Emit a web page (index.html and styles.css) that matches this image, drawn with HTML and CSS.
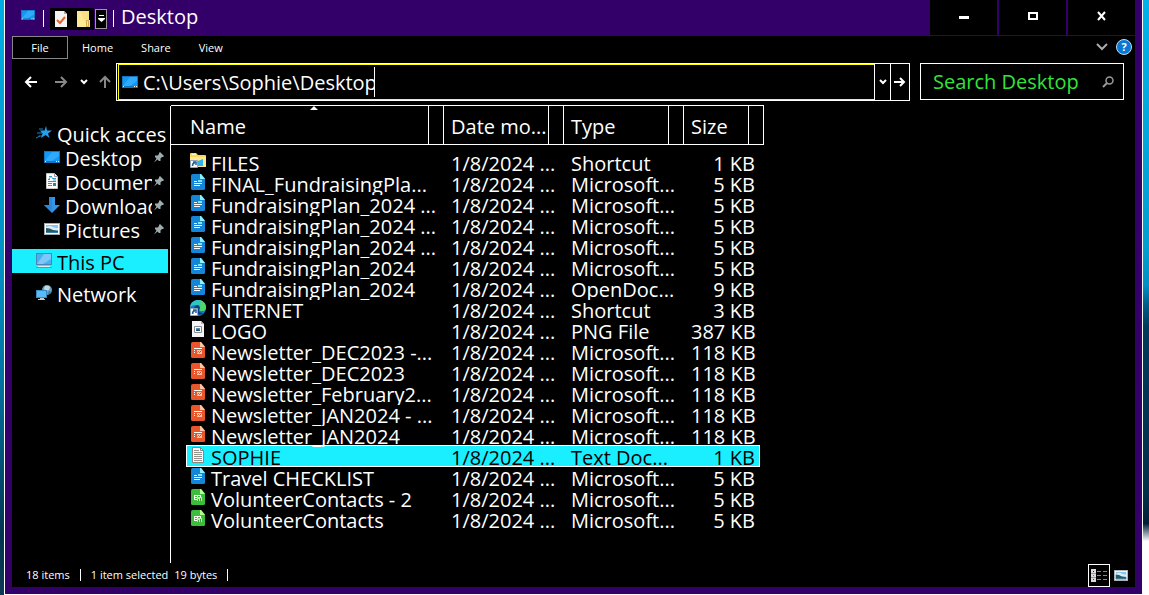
FILE: index.html
```html
<!DOCTYPE html>
<html lang="en">
<head>
<meta charset="utf-8">
<title>Desktop</title>
<link rel="stylesheet" href="styles.css">
</head>
<body>
<svg class="sprite" aria-hidden="true">
  <symbol id="i-doc" viewBox="0 0 16 16"><path d="M3 0h8l4 4.500v10q0 1.500-1.500 1.500h-11Q1 16 1 14.500V1.500Q1 0 3 0z" fill="#1585d8"/><path d="M10 0h1l4 5h-5z" fill="#8df0fd"/><path d="M8 6h4v2H8z" fill="#7ee6fa"/><path d="M4 7h3v1H4zM4 9h8v1H4zM4 11h6v1H4z" fill="#fff"/></symbol>
  <symbol id="i-slide" viewBox="0 0 16 16"><path d="M3 0h8l4 4.500v10q0 1.500-1.500 1.500h-11Q1 16 1 14.500V1.500Q1 0 3 0z" fill="#e9562b"/><path d="M10 0h1l4 5h-5z" fill="#ffc9a8"/><path d="M4 6h8v1H4zM4 8h1v1H4zM4 10h1v1H4z" fill="#fff"/><path d="M7 8h5v4H7z" fill="#ffc3a1"/><path d="m7.500 10.500 1-1 1 1 2-2" stroke="#c4451f" fill="none"/></symbol>
  <symbol id="i-sheet" viewBox="0 0 16 16"><path d="M3 0h8l4 4.500v10q0 1.500-1.500 1.500h-11Q1 16 1 14.500V1.500Q1 0 3 0z" fill="#3cbd3c"/><path d="M10 0h1l4 5h-5z" fill="#b5ff91"/><path d="M4 6h7v5H4z" fill="#fff"/><path d="M5 7h2v1H5zM8 7h2v1H8zM5 9h2v1H5z" fill="#3cbd3c"/><path d="M7 8h5v4H7z" fill="#b9f5a0"/><path d="M8 10h1v2H8zM10 9h1v3h-1z" fill="#33a333"/></symbol>
  <symbol id="i-folder" viewBox="0 0 16 16"><path d="M0 1q0-1 1-1h5l2 2h7q1 0 1 1v11H0z" fill="#fbd75e"/><path d="M2 1h4v1H2z" fill="#fff5c0"/><path d="M0 4h16v10H0z" fill="#ffe793"/><path d="M8 8l5-2v7H8z" fill="#31b4e8"/><path d="M0.500 7.500h7v7h-7z" fill="#fff" stroke="#8aa5bd"/><path d="M2.500 13q0-3 2.500-3.500M3 9h3v3" stroke="#225e9c" fill="none" stroke-width="1.500"/></symbol>
  <symbol id="i-edge" viewBox="0 0 16 16"><circle cx="8" cy="8" r="8" fill="#1877c8"/><path d="M0 7C1-1 13-3 16 6q.5 5-4 5-3 0-2-2 1-4-3-4Q2 5 0 7z" fill="#2fc5c0"/><path d="M9 0q6 1 7 7 0 4-4 4-3 0-2-2 1-5 0-9z" fill="#50d765"/><path d="M8 5Q2 6 5 12q4 5 9 1-4 0-5-2-1-1 1-3z" fill="#123f84"/><path d="M0.500 8.500h7v7h-7z" fill="#fff" stroke="#8aa5bd"/><path d="M2.500 14q0-3 2.500-3.500M3 10h3v3" stroke="#225e9c" fill="none" stroke-width="1.500"/></symbol>
  <symbol id="i-png" viewBox="0 0 16 16"><path d="M2 0h9l3 3v13H2z" fill="#f4f4f4"/><path d="M11 0v3h3z" fill="#b5b5b5"/><path d="M4.500 5.500h7v6h-7z" fill="#fff" stroke="#8b8b8b"/><path d="M6 7h4v3H6z" fill="#4b91c7"/><path d="M6 9l2-1 2 1v1H6z" fill="#26546c"/></symbol>
  <symbol id="i-txt" viewBox="0 0 16 16"><path d="M2.500.5h8l3 3v12h-11z" fill="#f8f8f8" stroke="#8b8580"/><path d="M10.500.5v3h3" fill="none" stroke="#8b8580"/><path d="M4 3h5v1H4zM4 5h8v1H4zM4 7h8v1H4zM4 9h8v1H4zM4 11h8v1H4zM4 13h8v1H4z" fill="#96928e"/></symbol>
  <symbol id="i-desktop" viewBox="0 0 16 12" preserveAspectRatio="none"><path d="M0 0h16v12H0z" fill="#1474bd"/><path d="M1 1h14v9H1z" fill="#1298f4"/><path d="M8 1h7v4L8 10H1z" fill="#2eabff"/><path d="M1 10h1v1H1zM12 10h1v1h-1zM14 10h1v1h-1z" fill="#fff"/></symbol>
  <symbol id="i-picture" viewBox="0 0 16 12" preserveAspectRatio="none"><path d="M0 0h16v12H0z" fill="#a9aaa8"/><path d="M1 1h14v10H1z" fill="#fff"/><path d="M2 2h12v8H2z" fill="#83c5f4"/><path d="M2 4q4-2 7 0l3 1h2v2H2z" fill="#d8edf5"/><path d="M2 5q4 0 7 2l5 1v2H2z" fill="#2b5960"/><path d="M2 9h12v1H2z" fill="#3b7eae"/></symbol>
  <symbol id="i-star" viewBox="0 0 16 16"><path d="M10 1l1 4.500h5l-4 3 1.500 4.500-4-3-4.500 3 1.500-4.500L4 5.500h4.500z" fill="#26a0ea"/><path d="M3 4h4M1 8h5M3 11h3M0 13l4-2" stroke="#1b82c8" fill="none"/></symbol>
  <symbol id="i-document" viewBox="0 0 16 16"><path d="M2.500.5h8l3 3v12h-11z" fill="#fff" stroke="#c7c7c7"/><path d="M10.500.5v3h3" fill="#eee" stroke="#999"/><path d="M5 3h3v1H5zM4 6h2v1H4zM9 5h3v1H9zM4 8h8v1H4zM4 10h4v1H4zM4 12h4v1H4z" fill="#3d92c8"/><path d="M5 6l2-3 2 3M9 7h3" stroke="#23a5dd" fill="none"/><path d="M9 10h3v3H9z" fill="#467991"/></symbol>
  <symbol id="i-download" viewBox="0 0 16 16"><path d="M5 0h6v8h5l-8 8-8-8h5z" fill="#3694e5"/><path d="M5 0h3v15L0 8h5z" fill="#2b87dc"/></symbol>
  <symbol id="i-pc" viewBox="0 0 16 16"><path d="M0 0h16v12H0z" fill="#4a87b2"/><path d="M1 1h14v10H1z" fill="#48aff2"/><path d="M8 1h7v5L7 11H1z" fill="#7dc8fa"/><path d="M2 13h12v1H2z" fill="#d9edf4"/><path d="M0 14h16v1H0z" fill="#71919f"/></symbol>
  <symbol id="i-network" viewBox="0 0 16 16"><circle cx="11" cy="5" r="5" fill="#669ebb"/><path d="M9 1q3-1 5 1l-1 3-3 1-2-2z" fill="#badbe3"/><path d="M13 6l2 1-3 3z" fill="#356f96"/><path d="M0 5h11v8H0z" fill="#3589c2"/><path d="M1 6h9v6H1z" fill="#5bbbf5"/><path d="M4 13h4v1H4zM2 14h7v1H2z" fill="#b9ccd5"/></symbol>
  <symbol id="i-pin" viewBox="0 0 12 12"><path d="M7 1l4 4-1 1-1 0-1.500 1.500V10H6L4.500 8.500 1 11.500 3.500 7.500 2 6V4.500h2.500L6 3V2z" fill="#9eacb0"/></symbol>
</svg>

<div class="window">
  <header class="titlebar">
    <svg class="app-icon"><use href="#i-desktop"/></svg>
    <span class="tick"></span>
    <div class="quick-tools">
      <button class="tool" aria-label="Properties"><svg width="14" height="16" viewBox="0 0 14 16"><path d="M1 0h9l3 3v13H1z" fill="#f5f4f4"/><path d="M10 0v3h3z" fill="#aaa"/><path d="M3 9l3 3 5-6" stroke="#e36331" stroke-width="2" fill="none"/></svg></button>
      <button class="tool" aria-label="New folder"><svg width="14" height="16" viewBox="0 0 14 16"><path d="M1 0h12v9h1v7H1z" fill="#fbdf83"/><path d="M1 0h3l8 16H1z" fill="#ffe893"/><path d="M10.500 15.500v-6h2v6z" fill="#ffe68e" stroke="#d2a94c"/></svg></button>
    </div>
    <button class="customize" aria-label="Customize toolbar"><svg width="7" height="8" viewBox="0 0 7 8"><path d="M1 0h5v1H1zM0 3h7v1L3.500 7 0 4z" fill="#fff"/></svg></button>
    <span class="tick"></span>
    <h1 class="title">Desktop</h1>
    <div class="controls">
      <button aria-label="Minimize"><svg width="12" height="10"><path d="M1 5h10v3H1z" fill="#fff"/></svg></button>
      <button aria-label="Maximize"><svg width="12" height="10"><path d="M2 2h8v6H2z" stroke="#fff" stroke-width="2" fill="none"/></svg></button>
      <button aria-label="Close"><svg width="12" height="10"><path d="M2 1l7 8M9 1L2 9" stroke="#fff" stroke-width="2" fill="none"/></svg></button>
    </div>
  </header>

  <div class="client">
    <nav class="tabs">
      <button class="tab file">File</button>
      <button class="tab">Home</button>
      <button class="tab">Share</button>
      <button class="tab">View</button>
      <button class="plain expand" aria-label="Expand ribbon"><svg width="12" height="8"><path d="M1 1l5 5 5-5" stroke="#aaa" stroke-width="2" fill="none"/></svg></button>
      <button class="help" aria-label="Help">?</button>
    </nav>

    <div class="addressbar">
      <button class="plain back" aria-label="Back"><svg width="14" height="14"><path d="M13 7H2M7 2L2 7l5 5" stroke="#fff" stroke-width="2" fill="none"/></svg></button>
      <button class="plain forward" aria-label="Forward"><svg width="14" height="14"><path d="M1 7h11M7 2l5 5-5 5" stroke="#888" stroke-width="2" fill="none"/></svg></button>
      <button class="plain recent" aria-label="Recent locations"><svg width="8" height="6"><path d="M1 1l3 3 3-3" stroke="#fff" stroke-width="2" fill="none"/></svg></button>
      <button class="plain up" aria-label="Up"><svg width="14" height="14"><path d="M7 13V2M2 7l5-5 5 5" stroke="#888" stroke-width="2" fill="none"/></svg></button>
      <div class="location">
        <div class="path">
          <svg class="path-icon"><use href="#i-desktop"/></svg>
          <input class="path-input" aria-label="Address" value="C:\Users\Sophie\Desktop">
          <span class="caret"></span>
        </div>
        <button class="history" aria-label="Previous locations"><svg width="8" height="6"><path d="M1 1l3 3 3-3" stroke="#fff" stroke-width="2" fill="none"/></svg></button>
        <button class="go" aria-label="Go"><svg width="12" height="12"><path d="M0 6h10M6 2l4 4-4 4" stroke="#fff" stroke-width="2" fill="none"/></svg></button>
      </div>
      <div class="search">
        <input class="search-input" aria-label="Search Desktop" placeholder="Search Desktop">
        <svg width="12" height="12"><circle cx="7.500" cy="4.500" r="3.500" stroke="#999" stroke-width="1.500" fill="none"/><path d="M5 7l-4 4" stroke="#999" stroke-width="2"/></svg>
      </div>
    </div>

    <div class="content">
      <nav class="sidebar">
        <a class="item" href="#"><svg><use href="#i-star"/></svg><span>Quick access</span></a>
        <a class="item child" href="#"><svg class="wide"><use href="#i-desktop"/></svg><span>Desktop</span><svg class="pin"><use href="#i-pin"/></svg></a>
        <a class="item child" href="#"><svg><use href="#i-document"/></svg><span>Documents</span><svg class="pin"><use href="#i-pin"/></svg></a>
        <a class="item child" href="#"><svg><use href="#i-download"/></svg><span>Downloads</span><svg class="pin"><use href="#i-pin"/></svg></a>
        <a class="item child" href="#"><svg class="wide"><use href="#i-picture"/></svg><span>Pictures</span><svg class="pin"><use href="#i-pin"/></svg></a>
        <a class="item group active" href="#"><svg><use href="#i-pc"/></svg><span>This PC</span></a>
        <a class="item group" href="#"><svg><use href="#i-network"/></svg><span>Network</span></a>
      </nav>

      <main class="files">
        <table class="list">
          <colgroup><col class="c-name"><col class="c-date"><col class="c-type"><col class="c-size"></colgroup>
          <thead>
            <tr>
              <th><div class="head"><svg class="sort" width="8" height="4"><path d="M0 4l4-4 4 4z" fill="#fff"/></svg>Name</div></th>
              <th><div class="head">Date mo...</div></th>
              <th><div class="head">Type</div></th>
              <th><div class="head">Size</div></th>
            </tr>
          </thead>
          <tbody>
            <tr><td><div><svg><use href="#i-folder"/></svg>FILES</div></td><td><div>1/8/2024 ...</div></td><td><div>Shortcut</div></td><td><div>1 KB</div></td></tr>
            <tr><td><div><svg><use href="#i-doc"/></svg>FINAL_FundraisingPla...</div></td><td><div>1/8/2024 ...</div></td><td><div>Microsoft...</div></td><td><div>5 KB</div></td></tr>
            <tr><td><div><svg><use href="#i-doc"/></svg>FundraisingPlan_2024 ...</div></td><td><div>1/8/2024 ...</div></td><td><div>Microsoft...</div></td><td><div>5 KB</div></td></tr>
            <tr><td><div><svg><use href="#i-doc"/></svg>FundraisingPlan_2024 ...</div></td><td><div>1/8/2024 ...</div></td><td><div>Microsoft...</div></td><td><div>5 KB</div></td></tr>
            <tr><td><div><svg><use href="#i-doc"/></svg>FundraisingPlan_2024 ...</div></td><td><div>1/8/2024 ...</div></td><td><div>Microsoft...</div></td><td><div>5 KB</div></td></tr>
            <tr><td><div><svg><use href="#i-doc"/></svg>FundraisingPlan_2024</div></td><td><div>1/8/2024 ...</div></td><td><div>Microsoft...</div></td><td><div>5 KB</div></td></tr>
            <tr><td><div><svg><use href="#i-doc"/></svg>FundraisingPlan_2024</div></td><td><div>1/8/2024 ...</div></td><td><div>OpenDoc...</div></td><td><div>9 KB</div></td></tr>
            <tr><td><div><svg><use href="#i-edge"/></svg>INTERNET</div></td><td><div>1/8/2024 ...</div></td><td><div>Shortcut</div></td><td><div>3 KB</div></td></tr>
            <tr><td><div><svg><use href="#i-png"/></svg>LOGO</div></td><td><div>1/8/2024 ...</div></td><td><div>PNG File</div></td><td><div>387 KB</div></td></tr>
            <tr><td><div><svg><use href="#i-slide"/></svg>Newsletter_DEC2023 -...</div></td><td><div>1/8/2024 ...</div></td><td><div>Microsoft...</div></td><td><div>118 KB</div></td></tr>
            <tr><td><div><svg><use href="#i-slide"/></svg>Newsletter_DEC2023</div></td><td><div>1/8/2024 ...</div></td><td><div>Microsoft...</div></td><td><div>118 KB</div></td></tr>
            <tr><td><div><svg><use href="#i-slide"/></svg>Newsletter_February2...</div></td><td><div>1/8/2024 ...</div></td><td><div>Microsoft...</div></td><td><div>118 KB</div></td></tr>
            <tr><td><div><svg><use href="#i-slide"/></svg>Newsletter_JAN2024 - ...</div></td><td><div>1/8/2024 ...</div></td><td><div>Microsoft...</div></td><td><div>118 KB</div></td></tr>
            <tr><td><div><svg><use href="#i-slide"/></svg>Newsletter_JAN2024</div></td><td><div>1/8/2024 ...</div></td><td><div>Microsoft...</div></td><td><div>118 KB</div></td></tr>
            <tr class="selected"><td><div><svg><use href="#i-txt"/></svg>SOPHIE</div></td><td><div>1/8/2024 ...</div></td><td><div>Text Doc...</div></td><td><div>1 KB</div></td></tr>
            <tr><td><div><svg><use href="#i-doc"/></svg>Travel CHECKLIST</div></td><td><div>1/8/2024 ...</div></td><td><div>Microsoft...</div></td><td><div>5 KB</div></td></tr>
            <tr><td><div><svg><use href="#i-sheet"/></svg>VolunteerContacts - 2</div></td><td><div>1/8/2024 ...</div></td><td><div>Microsoft...</div></td><td><div>5 KB</div></td></tr>
            <tr><td><div><svg><use href="#i-sheet"/></svg>VolunteerContacts</div></td><td><div>1/8/2024 ...</div></td><td><div>Microsoft...</div></td><td><div>5 KB</div></td></tr>
          </tbody>
        </table>
      </main>
    </div>

    <footer class="status">
      <span class="count">18 items</span>
      <span class="selection">1 item selected</span>
      <span class="bytes">19 bytes</span>
      <div class="views">
        <button class="view current" aria-label="Details view"><svg width="16" height="13"><path d="M0 0h5v13H0z" fill="#ddd"/><path d="M0 4h5v1H0zM0 8h5v1H0z" fill="#999"/><path d="M2 2h1v1H2z" fill="#222"/><path d="M2 6h1v1H2z" fill="#258be0"/><path d="M2 10h1v1H2z" fill="#c00"/><path d="M6 2h4v1H6zM12 2h4v1h-4zM6 6h4v1H6zM12 6h4v1h-4zM6 10h4v1H6zM12 10h4v1h-4z" fill="#888"/></svg></button>
        <button class="view" aria-label="Thumbnail view"><svg width="14" height="11"><use href="#i-picture"/></svg></button>
      </div>
    </footer>
  </div>
</div>
</body>
</html>
```

FILE: styles.css
```css
* { box-sizing: border-box; }

body {
  margin: 0;
  padding: 0 6px 0 4px;
  height: 100vh;
  overflow: hidden;
  font: 20px/24px "Open Sans", "Noto Sans", sans-serif;
  color: #fff;
  background:
    linear-gradient(#00b2ea 0%, #009fd0 42%, #0090c4 48%, #00608c 51%, #023a5a 55%, #01304a 83%, #012038 88%, #fff 91%) right / 6px 100% no-repeat,
    linear-gradient(#00aee4 0%, #0090c4 45%, #00719f 65%, #023450 90%, #0b3a55 100%) left / 4px 100% no-repeat;
}

button, input {
  margin: 0;
  padding: 0;
  border: 0;
  background: #000;
  color: inherit;
  font: inherit;
  outline: 0;
}

button { display: flex; align-items: center; justify-content: center; }
svg { display: block; flex: none; }
.sprite { display: none; }

.window {
  display: flex;
  flex-direction: column;
  height: 100%;
  border: 1px solid #fff;
  border-top: 0;
  background: #330069;
}

.titlebar { display: flex; align-items: center; height: 36px; padding: 0 7px 0 16px; }
.app-icon { width: 14px; height: 10px; margin: 0 8px 6px 0; }
.tick { width: 1px; height: 17px; background: #fff; }
.quick-tools { display: flex; align-items: center; gap: 8px; height: 22px; margin: 2px 0 0 6px; padding: 0 4px; background: #000; }
.customize { width: 12px; height: 20px; margin: 2px 6px 0 1px; border: 1px solid #999; }
.title { margin: 0 0 2px 7px; font-size: 20px; font-weight: 400; }
.controls { display: flex; align-self: stretch; gap: 2px; height: 35px; margin-left: auto; }
.controls button { width: 67px; padding-bottom: 4px; }

.client { display: flex; flex: 1; flex-direction: column; min-height: 0; margin: 0 7px 7px 7px; background: #000; }

.tabs { display: flex; align-items: center; height: 24px; padding-right: 3px; font-size: 11px; line-height: 16px; }
.tab { padding: 0 14px; }
.tab.file { align-self: flex-start; width: 56px; height: 23px; border: 1px solid #888; }
.plain { flex: none; }
.expand { margin: 0 0 2px auto; }
.help { width: 16px; height: 16px; margin: 0 0 2px 8px; border: 1px solid #bfdcf2; border-radius: 50%; background: #0878d4; font-weight: 700; }

.addressbar { display: flex; align-items: flex-start; height: 44px; padding: 3px 11px 0 12px; }
.addressbar .plain { height: 38px; }
.forward { margin-left: 16px; }
.recent { margin-left: 12px; }
.up { margin: 0 5px 0 10px; }
.location { display: flex; flex: 1; height: 38px; margin-left: -1px; border: 1px solid #fff; }
.path { display: flex; flex: 1; align-items: center; min-width: 0; margin-left: 1px; border: 1px solid #ff0; border-right: 0; }
.path-icon { width: 16px; height: 12px; margin: 0 5px 0 3px; }
.path-input { width: 231px; height: 30px; }
.caret { width: 1px; height: 30px; background: #fff; }
.history { width: 17px; border: 1px solid #fff; border-width: 0 1px; }
.go { width: 18px; }
.search { display: flex; align-items: center; width: 204px; height: 37px; margin-left: 10px; padding: 0 9px 0 12px; border: 1px solid #fff; }
.search-input { flex: 1; min-width: 0; height: 30px; }
.search-input::placeholder { color: #33e33b; opacity: 1; }

.content { display: flex; flex: 1; min-height: 0; }
.sidebar { width: 159px; margin-top: 2px; padding: 15px 2px 0 0; border-right: 1px solid #fff; }
.item { display: flex; align-items: center; height: 24px; padding: 0 2px 0 24px; color: inherit; text-decoration: none; white-space: nowrap; }
.item svg { width: 16px; height: 16px; margin-right: 5px; }
.item svg.wide { height: 12px; }
.item span { flex: 1; min-width: 0; padding-top: 4px; overflow: hidden; }
.item.child { padding-left: 32px; }
.item.group { margin-top: 8px; }
.item.active { background: #19efff; color: #000; }
.item svg.pin { width: 12px; height: 12px; margin: 0 1px; }

.files { flex: 1; min-width: 0; padding-top: 1px; overflow: hidden; }
.list { width: 593px; table-layout: fixed; border-spacing: 0; }
.c-name { width: 273px; }
.c-date, .c-type { width: 120px; }
.c-size { width: 80px; }
.list th { padding: 0; text-align: left; font-weight: 400; border: 1px solid #fff; border-left: 0; }
.head { position: relative; height: 38px; margin-right: 14px; padding-left: 7px; line-height: 42px; border-right: 1px solid #fff; white-space: nowrap; }
th:first-child .head { padding-left: 19px; }
.sort { position: absolute; left: 54%; top: 0; }
.list tbody::before { content: ""; display: table-row; height: 7px; }
.list td { padding: 0; }
.list td div { height: 21px; padding-left: 7px; line-height: 23px; overflow: clip; overflow-clip-margin: 1px; white-space: nowrap; }
.list td:first-child { padding-left: 15px; }
.list td:first-child div { display: flex; gap: 5px; padding-left: 4px; }
.list td svg { width: 16px; height: 16px; margin-top: 1px; }
.list td:last-child { padding-right: 4px; text-align: right; }
.list td:last-child div { padding-right: 5px; }
.list .selected div { background: #19efff; color: #000; border-bottom: 1px solid #fff; box-shadow: 0 -1px #fff; }
.list .selected td:first-child div { padding-left: 3px; border-left: 1px solid #fff; }
.list .selected td:last-child div { padding-right: 4px; border-right: 1px solid #fff; }

.status { display: flex; align-items: center; height: 24px; padding: 0 7px 0 14px; font-size: 11px; line-height: 12px; }
.count { padding-right: 10px; border-right: 1px solid #fff; }
.selection { padding-left: 10px; }
.bytes { margin-left: 6px; padding-right: 10px; border-right: 1px solid #fff; }
.views { display: flex; align-items: center; gap: 4px; margin-left: auto; }
.view.current { width: 22px; height: 23px; border: 1px solid #fff; }
```
